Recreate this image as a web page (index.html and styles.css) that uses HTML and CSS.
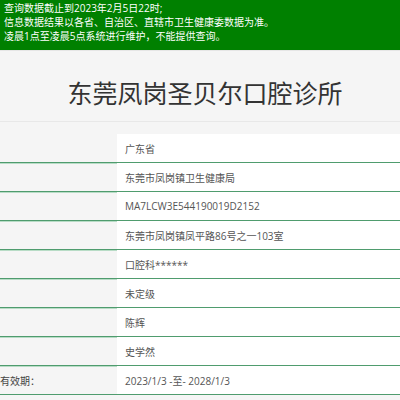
FILE: index.html
```html
<!DOCTYPE html>
<html lang="zh-CN">
<head>
<meta charset="utf-8">
<title>东莞凤岗圣贝尔口腔诊所</title>
<link rel="stylesheet" href="styles.css">
</head>
<body>
<div class="notice">
  <p>查询数据截止到2023年2月5日22时;</p>
  <p>信息数据结果以各省、自治区、直辖市卫生健康委数据为准。</p>
  <p>凌晨1点至凌晨5点系统进行维护，不能提供查询。</p>
</div>
<div class="title-bar">
  <h1 class="title">东莞凤岗圣贝尔口腔诊所</h1>
</div>
<div class="info">
  <div class="row"><div class="label"></div><div class="value">广东省</div></div>
  <div class="row"><div class="label"></div><div class="value">东莞市凤岗镇卫生健康局</div></div>
  <div class="row"><div class="label"></div><div class="value">MA7LCW3E544190019D2152</div></div>
  <div class="row"><div class="label"></div><div class="value">东莞市凤岗镇凤平路86号之一103室</div></div>
  <div class="row"><div class="label"></div><div class="value">口腔科******</div></div>
  <div class="row"><div class="label"></div><div class="value">未定级</div></div>
  <div class="row"><div class="label"></div><div class="value">陈辉</div></div>
  <div class="row"><div class="label"></div><div class="value">史学然</div></div>
  <div class="row"><div class="label">有效期：</div><div class="value">2023/1/3 -至- 2028/1/3</div></div>
</div>
</body>
</html>
```
FILE: styles.css
```css
html, body {
  margin: 0;
  padding: 0;
}
body {
  background: #f5f5f5;
  font-family: "Open Sans", "Noto Sans CJK SC", sans-serif;
  color: #333;
}
.notice {
  background: #008000;
  color: #fff;
  font-size: 10px;
  line-height: 14px;
  padding: 1px 4px 7px;
  border-bottom: 1px solid #e6e6e6;
}
.notice p {
  margin: 0;
  white-space: nowrap;
}
.title-bar {
  height: 70px;
  border-bottom: 1px solid #e8e8e8;
  display: flex;
  align-items: center;
  justify-content: center;
  padding-left: 10px;
}
.title {
  margin: 12px 0 0;
  font-family: "Noto Sans CJK SC", sans-serif;
  font-weight: normal;
  font-size: 25px;
  color: #333;
}
.info {
  margin-top: 12px;
}
.row {
  display: flex;
  height: 28px;
  border-bottom: 1px solid #4f9c6e;
  box-shadow: 0 1px 0 #b8dcc6;
}
.label {
  width: 117px;
  flex: none;
  display: flex;
  align-items: center;
  font-size: 10px;
  color: #444;
  white-space: nowrap;
}
.value {
  flex: 1;
  background: #fff;
  display: flex;
  align-items: center;
  padding-left: 8px;
  font-size: 10px;
  color: #555;
  white-space: nowrap;
}
```
